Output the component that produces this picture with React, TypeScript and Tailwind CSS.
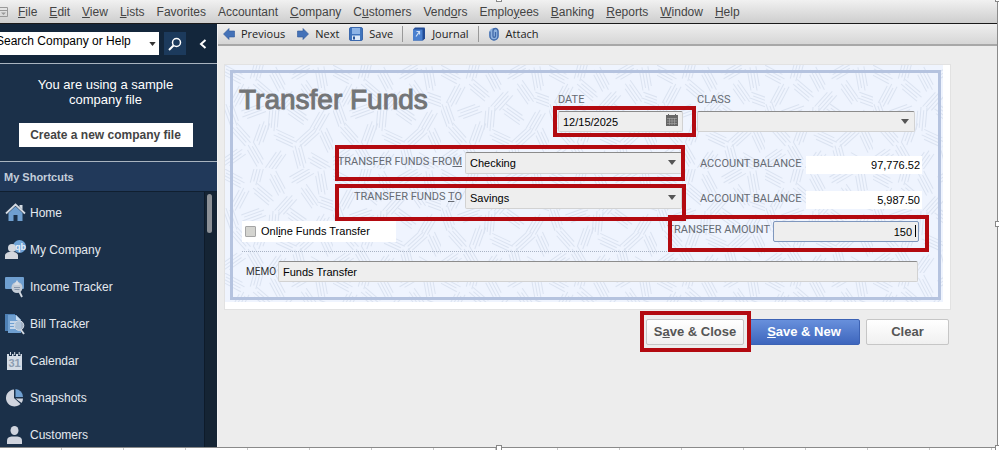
import type { ReactNode } from "react";

const menuItems = [
  { before: "", key: "F", after: "ile" },
  { before: "", key: "E", after: "dit" },
  { before: "", key: "V", after: "iew" },
  { before: "", key: "L", after: "ists" },
  { before: "Favorites", key: "", after: "" },
  { before: "Accountant", key: "", after: "" },
  { before: "", key: "C", after: "ompany" },
  { before: "C", key: "u", after: "stomers" },
  { before: "Vend", key: "o", after: "rs" },
  { before: "Emplo", key: "y", after: "ees" },
  { before: "", key: "B", after: "anking" },
  { before: "", key: "R", after: "eports" },
  { before: "", key: "W", after: "indow" },
  { before: "", key: "H", after: "elp" },
];

const HomeIcon = () => (
  <svg viewBox="0 0 22 22" className="size-[22px]">
    <path d="M14.5 3h3v5l-3-3z" fill="#d5dbe3" />
    <path d="M3.5 11 10.5 4.5 17.5 11v8h-5v-6h-4v6h-5z" fill="#6f9fd0" />
    <path d="M1 11.5 10.5 2.5 20 11.5" fill="none" stroke="#d5dbe3" strokeWidth="1.8" />
  </svg>
);

const CompanyIcon = () => (
  <svg viewBox="0 0 22 22" className="size-[22px]">
    <circle cx="14.5" cy="7.5" r="6.5" fill="#6fa3d6" />
    <text x="10" y="11" fontSize="9" fontWeight="bold" fill="#e8f0fa" fontFamily="Liberation Sans, sans-serif">qb</text>
    <circle cx="7" cy="9" r="4" fill="#d3d7de" />
    <path d="M0 20v-3.500q0-2.500 4-3.500h5q4 1 4 3.500V20z" fill="#d3d7de" />
  </svg>
);

const IncomeIcon = () => (
  <svg viewBox="0 0 22 22" className="size-[22px]">
    <rect x="0" y="1" width="19" height="12" rx="1" fill="#6f9fd0" />
    <circle cx="12" cy="11.500" r="5.500" fill="#c4ccd6" />
    <path d="M12 4l3 5H9z" fill="#d7dde5" />
    <path d="M9 11.500h6M9.500 13.500h5" stroke="#8796aa" />
    <path d="M14.500 16l2.500 5" stroke="#d5dbe3" strokeWidth="1.8" />
  </svg>
);

const BillIcon = () => (
  <svg viewBox="0 0 22 22" className="size-[22px]">
    <path d="M0 1h10v3H3v14H0z" fill="#4d80b5" />
    <path d="M3 2h8l5 5v13H3z" fill="#6f9fd0" />
    <path d="M11 2v5h5z" fill="#c9dcf0" />
    <path d="M5 9h6M5 12h6M5 15h5" stroke="#dfe9f4" strokeWidth="1.400" />
    <circle cx="14" cy="12.500" r="4.800" fill="#b9c8d9" fillOpacity=".85" stroke="#d5dbe3" />
    <path d="M16 17l3 4" stroke="#d5dbe3" strokeWidth="1.800" />
  </svg>
);

const CalendarIcon = () => (
  <svg viewBox="0 0 22 22" className="size-[22px]">
    <path d="M2 4h15v16H2z" fill="#d3dbe5" />
    <path d="M4 1h3v5H4zM8.500 1h2.500v5H8.500zM13 1h2.500v5H13z" fill="#1b3049" />
    <path d="M5.500 2v3M9.700 2v3M14.200 2v3" stroke="#d3dbe5" />
    <text x="3.500" y="17" fontSize="11" fontWeight="bold" fill="#8c9db1" fontFamily="Liberation Sans, sans-serif">31</text>
  </svg>
);

const SnapshotIcon = () => (
  <svg viewBox="0 0 22 22" className="size-[22px]">
    <path d="M9 11V2.500A8.500 8.500 0 1 0 15.500 17z" fill="#d0d4de" />
    <path d="M10.500 10V2a8 8 0 0 1 7.500 8z" fill="#6f9fd0" />
    <path d="M10.500 11.500H18q0 2.500-1.500 4.500z" fill="#d0d4de" />
  </svg>
);

const CustomerIcon = () => (
  <svg viewBox="0 0 22 22" className="size-[22px]">
    <ellipse cx="9.500" cy="6.500" rx="4" ry="4.500" fill="#d0d4de" />
    <path d="M2 20v-3.500q0-3.500 4.500-4h6q4.500.5 4.500 4V20z" fill="#d0d4de" />
  </svg>
);

const shortcuts = [
  { name: "Home", icon: <HomeIcon /> },
  { name: "My Company", icon: <CompanyIcon /> },
  { name: "Income Tracker", icon: <IncomeIcon /> },
  { name: "Bill Tracker", icon: <BillIcon /> },
  { name: "Calendar", icon: <CalendarIcon /> },
  { name: "Snapshots", icon: <SnapshotIcon /> },
  { name: "Customers", icon: <CustomerIcon /> },
];

const ArrowIcon = ({ flip = false }: { flip?: boolean }) => (
  <svg viewBox="0 0 12 12" className={flip ? "size-3 rotate-180" : "size-3"}>
    <path d="M.5 6 6 .5V3h5.500v6H6v2.500z" fill="#4472b8" stroke="#2f5898" strokeWidth=".6" />
  </svg>
);

const SaveIcon = () => (
  <svg viewBox="0 0 14 14" className="size-[14px]">
    <rect x=".5" y=".5" width="13" height="13" rx="1.500" fill="#3f74bd" stroke="#3a68ad" />
    <rect x="3" y="1" width="8" height="6" fill="#8db4e6" />
    <rect x="3" y="8.500" width="8" height="4.500" fill="#dce9f8" />
    <rect x="4" y="9.500" width="2" height="3" fill="#2b579a" />
  </svg>
);

const JournalIcon = () => (
  <svg viewBox="0 0 14 14" className="size-[14px]">
    <path d="M1 2.500 3 .5h9.500l.5 1v10L11 13.500H1z" fill="#234c96" />
    <path d="M1 2.500h9.500v11H1z" fill="#4a80cf" />
    <path d="M4.500 4.500h3v3M7.500 4.500 4 9.500" stroke="#cfe0f6" strokeWidth="1.200" fill="none" />
  </svg>
);

const AttachIcon = () => (
  <svg viewBox="0 0 12 14" className="h-[14px] w-3">
    <rect x="1" y="1" width="10" height="12.500" rx="5" fill="#8fb2de" />
    <path d="M2 4.500v4.500a4 4 0 0 0 8 0V4a2.500 2.500 0 0 0-5 0v5a1 1 0 0 0 2.500 0V5" fill="none" stroke="#3f68a8" strokeWidth="1.300" />
  </svg>
);

// Woven background of the check: groups of short parallel strokes, as [x, y, angle]
const strokes = [
  [8, 10, 28], [32, 4, 105], [52, 15, 62], [76, 6, 150], [96, 14, 80],
  [14, 30, 118], [38, 26, 40], [60, 36, 132], [84, 28, 55], [104, 36, 20],
  [6, 50, 70], [28, 46, 160], [48, 54, 95], [72, 50, 35], [94, 56, 120],
  [16, 70, 48], [36, 68, 110], [60, 74, 25], [82, 72, 138], [102, 76, 65],
  [8, 92, 145], [30, 90, 60], [50, 96, 125], [74, 92, 75], [94, 98, 30],
];

const PaperPattern = () => (
  <svg className="absolute inset-0 size-full" aria-hidden="true">
    <defs>
      <pattern id="paper" width="108" height="104" patternUnits="userSpaceOnUse">
        <rect width="108" height="104" fill="#eff4fe" />
        {strokes.map(([x, y, angle]) => (
          <g key={`${x}-${y}`} transform={`translate(${x} ${y}) rotate(${angle})`} stroke="#dbe3f1">
            <path d="M-12-5H8M-9-2H12M-12 1H9M-8 4H11" />
          </g>
        ))}
      </pattern>
    </defs>
    <rect width="100%" height="100%" fill="url(#paper)" />
  </svg>
);

const Caret = () => (
  <svg viewBox="0 0 8 5" className="pointer-events-none absolute right-[6px] top-2 h-[5px] w-2">
    <path d="M0 0h8L4 5z" fill="#555" />
  </svg>
);

const Highlight = ({ className }: { className: string }) => (
  <span className={`pointer-events-none absolute border-4 border-[#b30a10] ${className}`} />
);

const fieldClass =
  "block w-full appearance-none rounded-[2px] border border-[#d2d2d2] border-t-[#8c8c8c] bg-[#eeeeee] pl-1 text-[11px] text-black outline-none";
const labelClass = "whitespace-nowrap font-[Roboto,sans-serif] text-[11px] leading-[15px] text-[#666b73]";

const ToolButton = ({ icon, children }: { icon: ReactNode; children: ReactNode }) => (
  <button className="flex items-center gap-[6px]">
    {icon}
    {children}
  </button>
);

const Sidebar = () => (
  <aside className="flex w-[218px] shrink-0 flex-col border-r border-[#f4f4f4] bg-[#1b3049] text-white">
    <div className="flex h-[39px] shrink-0 items-center bg-[#13263b]">
      <div className="relative w-[159px] overflow-hidden bg-white">
        <input
          aria-label="Search Company or Help"
          defaultValue="Search Company or Help"
          className="-ml-1 block h-[23px] w-full pb-[6px] text-[12px] text-black outline-none"
        />
        <svg viewBox="0 0 8 5" className="absolute right-[3px] top-[10px] h-[4px] w-[7px]">
          <path d="M0 0h8L4 5z" fill="#333" />
        </svg>
      </div>
      <button aria-label="Search" className="ml-[5px] flex h-[23px] w-[22px] items-center justify-center bg-[#1c3a5c]">
        <svg viewBox="0 0 14 14" className="size-[14px]" fill="none" stroke="#fff">
          <circle cx="8.500" cy="5.500" r="4" strokeWidth="1.500" />
          <path d="M5.500 8.500 1 13" strokeWidth="2" />
        </svg>
      </button>
      <button aria-label="Collapse" className="ml-[13px]">
        <svg viewBox="0 0 8 10" className="h-[10px] w-2" fill="none" stroke="#fff" strokeWidth="2">
          <path d="M6.500 1 2 5l4.500 4" />
        </svg>
      </button>
    </div>

    <div className="shrink-0 border-y border-[#a9b4c0] pb-[14px] pl-4 pr-[22px] pt-[13px] text-center">
      <p className="mx-auto w-[160px] text-[13px] leading-[15px]">You are using a sample company file</p>
      <button className="mt-4 h-6 w-[174px] bg-white text-[12px] font-bold text-[#444]">
        Create a new company file
      </button>
    </div>

    <h2 className="h-[30px] shrink-0 border-b border-[#101f30] bg-[#21395a] pl-1 text-[11px] font-bold leading-[30px] text-[#c3cedb]">
      My Shortcuts
    </h2>

    <div className="flex min-h-0 flex-1">
      <nav className="flex-1 overflow-hidden pt-[2px]">
        {shortcuts.map((item) => (
          <a key={item.name} href="#" className="flex h-[37px] items-center gap-[3px] pl-[5px] text-[12px] text-[#e4e9ef]">
            {item.icon}
            {item.name}
          </a>
        ))}
      </nav>
      <div className="w-[13px] border-l border-[#0e1b2a] bg-[#152434] pl-[2px] pt-[2px]">
        <div className="h-[39px] w-[5px] rounded-full bg-[#8c9096]" />
      </div>
    </div>
  </aside>
);

const AccountRow = ({
  id,
  label,
  value,
  balance,
  highlight,
}: {
  id: string;
  label: ReactNode;
  value: string;
  balance: string;
  highlight: string;
}) => (
  <div className="flex items-center">
    <div className="relative ml-[93px] flex flex-1 items-center justify-end gap-[3px]">
      <label htmlFor={id} className={`${labelClass} pb-1`}>
        {label}
      </label>
      <div className="relative w-[217px]">
        <select id={id} defaultValue={value} className={`${fieldClass} h-[22px]`}>
          <option>{value}</option>
        </select>
        <Caret />
      </div>
      <Highlight className={highlight} />
    </div>
    <label htmlFor={`${id}-balance`} className={`${labelClass} ml-[18px] w-[99px]`}>
      ACCOUNT BALANCE
    </label>
    <input
      id={`${id}-balance`}
      readOnly
      value={balance}
      className="ml-[7px] mt-[3px] h-[18px] w-[116px] bg-white pr-[2px] text-right text-[11px] text-black outline-none"
    />
  </div>
);

const TransferForm = () => (
  <div className="ml-[6px] mr-[46px] mt-[18px] border border-[#e2e2e2] bg-white">
    <div className="relative mb-[7px] mr-[7px] pb-[2px] pl-[5px] pr-[2px] pt-[5px]">
      <PaperPattern />
      <form className="relative border-[3px] border-[#b5c3df] pb-[15px] pl-[9px] pr-[16px] pt-[10px]">
        <div className="flex items-start pr-[7px]">
          <h1 className="-ml-[3px] flex-1 text-[28px] leading-[34px] text-[#737577] [-webkit-text-stroke:1px_#737577]">
            Transfer Funds
          </h1>
          <div className="mt-[9px] w-[125px]">
            <label htmlFor="date" className={`${labelClass} block`}>
              DATE
            </label>
            <div className="relative mt-1">
              <input id="date" defaultValue="12/15/2025" className={`${fieldClass} h-[21px]`} />
              <svg viewBox="0 0 12 12" className="absolute right-[5px] top-[3px] size-3">
                <path d="M0 1h12v11H0z" fill="#666" />
                <path d="M2.500 0v2M9.500 0v2" stroke="#666" />
                <path d="M1 4.500h10M1 7h10M1 9.500h10M3.500 4v7M6 4v7M8.500 4v7" stroke="#aaa" strokeWidth=".6" />
              </svg>
              <Highlight className="-bottom-[5px] -left-[5px] -right-[13px] -top-[5px]" />
            </div>
          </div>
          <div className="ml-[14px] mt-[9px] w-[218px]">
            <label htmlFor="class" className={`${labelClass} block`}>
              CLASS
            </label>
            <div className="relative mt-1">
              <select id="class" className={`${fieldClass} h-[21px]`}>
                <option></option>
              </select>
              <Caret />
            </div>
          </div>
        </div>

        <div className="mt-5">
          <AccountRow
            id="from"
            label={<>TRANSFER FUNDS FRO<u>M</u></>}
            value="Checking"
            balance="97,776.52"
            highlight="-bottom-[7px] -top-[7px] left-0 -right-[3px]"
          />
        </div>
        <div className="mt-[13px]">
          <AccountRow
            id="to"
            label={<>TRANSFER FUNDS <u>T</u>O</>}
            value="Savings"
            balance="5,987.50"
            highlight="-bottom-[12px] -top-[3px] left-0 -right-[4px]"
          />
        </div>

        <div className="mt-3 flex items-center justify-between pr-[3px]">
          <label className="flex h-[21px] w-[154px] items-center gap-[5px] bg-white pl-[3px] text-[11px] text-black">
            <input
              type="checkbox"
              className="size-[11px] appearance-none rounded-[1px] border border-[#a5a5a5] bg-[#d4d4d0]"
            />
            <span>
              Onl<u>i</u>ne Funds Transfer
            </span>
          </label>
          <div className="relative flex items-center gap-[3px]">
            <label htmlFor="amount" className={`${labelClass} pb-1`}>
              TRANSFER AMOUNT
            </label>
            <div className="relative w-[146px]">
              <input
                id="amount"
                defaultValue="150"
                className="block h-[21px] w-full rounded-[2px] border border-[#7f97bd] bg-[#eeeeee] pr-[6px] text-right text-[11px] text-black outline-none"
              />
              <span className="absolute right-[3px] top-1 h-3 w-px bg-black" />
            </div>
            <Highlight className="-bottom-[10px] left-0 -right-[10px] -top-[6px]" />
          </div>
        </div>

        <div className="mr-[3px] mt-[9px] border-t border-dotted border-[#a9b3c4]" />

        <div className="mt-[9px] flex items-center gap-[2px] pl-1 pr-1">
          <label htmlFor="memo" className="text-[10px] text-[#333] font-[Roboto,sans-serif]">
            MEMO
          </label>
          <input id="memo" defaultValue="Funds Transfer" className={`${fieldClass} h-[21px]`} />
        </div>
      </form>
    </div>
  </div>
);

const App = () => {
  return (
    <div className="flex h-screen flex-col overflow-hidden bg-white font-['Liberation_Sans',Arial,sans-serif]">
      <div className="relative mr-px flex min-h-0 flex-1 flex-col border-b border-r border-[#8a8a8a] bg-[#ededed]">
        <nav className="flex h-6 shrink-0 items-center border-b border-[#1a1a1a] bg-linear-to-b from-[#f1f1f1] to-[#cecece] text-[12px] text-[#444]">
          <svg viewBox="0 0 8 10" className="h-[10px] w-2" fill="none" stroke="#999">
            <path d="M0 .5h7.500v9H0M0 3.500h7" />
            <path d="M1 5.500h5L3.500 8z" fill="#999" stroke="none" />
          </svg>
          <div className="ml-[10px] flex gap-3">
            {menuItems.map((m) => (
              <a key={m.before + m.key + m.after} href="#">
                {m.before}
                <u>{m.key}</u>
                {m.after}
              </a>
            ))}
          </div>
        </nav>

        <div className="flex min-h-0 flex-1">
          <Sidebar />
          <main className="flex-1">
            <div className="flex h-[22px] items-center border-b-2 border-[#a8a8a8] bg-linear-to-b from-[#efefef] to-[#d6d6d6] pl-[5px] font-['Open_Sans',sans-serif] text-[11px] text-[#222]">
              <ToolButton icon={<ArrowIcon />}>Previous</ToolButton>
              <span className="w-3" />
              <ToolButton icon={<ArrowIcon flip />}>Next</ToolButton>
              <span className="w-[10px]" />
              <ToolButton icon={<SaveIcon />}>Save</ToolButton>
              <span className="mx-[9px] h-4 w-px bg-[#999]" />
              <ToolButton icon={<JournalIcon />}>Journal</ToolButton>
              <span className="mx-[9px] h-4 w-px bg-[#999]" />
              <ToolButton icon={<AttachIcon />}>Attach</ToolButton>
            </div>

            <TransferForm />

            <div className="mr-[48px] mt-[9px] flex justify-end text-[13px] font-bold text-[#555]">
              <div className="relative mr-1">
                <button className="h-[26px] w-[98px] rounded-[2px] border border-[#c6c6c6] bg-linear-to-b from-white to-[#f0f0f0]">
                  S<u>a</u>ve &amp; Close
                </button>
                <Highlight className="-bottom-[7px] -left-[6px] -right-[7px] -top-[8px] z-10" />
              </div>
              <button className="mr-[6px] h-[26px] w-[112px] rounded-[2px] border border-[#3c62b4] bg-linear-to-b from-[#6890dc] to-[#3e66bd] text-white">
                <u>S</u>ave &amp; New
              </button>
              <button className="h-[26px] w-[83px] rounded-[2px] border border-[#c6c6c6] bg-linear-to-b from-white to-[#f0f0f0]">
                Clear
              </button>
            </div>
          </main>
        </div>

        {/* resize handles of the selected window */}
        <span className="absolute -top-1 left-1/2 size-[6px] -translate-x-1/2 border border-[#888] bg-white" />
        <span className="absolute -bottom-1 left-1/2 size-[6px] -translate-x-1/2 border border-[#888] bg-white" />
        <span className="absolute -right-1 top-1/2 size-[6px] -translate-y-1/2 border border-[#888] bg-white" />
        <span className="absolute -right-1 -top-1 size-[6px] border border-[#888] bg-white" />
        <span className="absolute -bottom-1 -right-1 size-[6px] border border-[#888] bg-white" />
      </div>
      <div className="h-[2px] shrink-0 bg-[repeating-linear-gradient(to_right,#fff_0,#fff_61px,#c8c8c8_61px,#c8c8c8_62px)]" />
    </div>
  );
};

export default App;
